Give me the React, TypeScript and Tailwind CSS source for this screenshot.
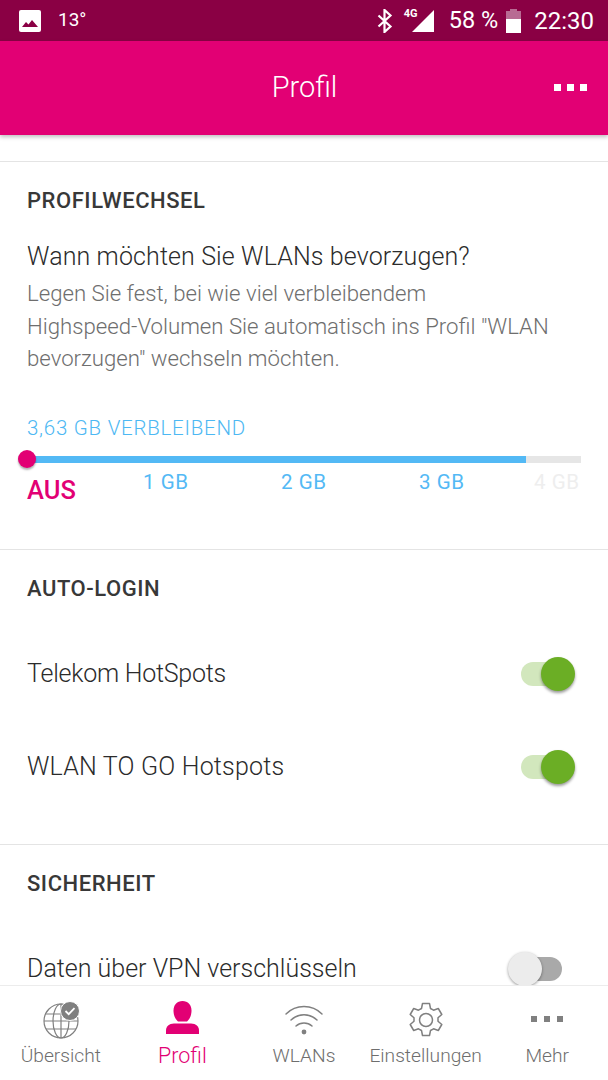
import React from 'react';

const Toggle = ({ on }: { on: boolean }) =>
  on ? (
    <div className="relative w-[54px] h-[24px] shrink-0">
      <div className="absolute left-0 top-0 w-[46px] h-[24px] rounded-full bg-[#d2e7bd]" />
      <div className="absolute left-[20px] top-[-5px] w-[34px] h-[34px] rounded-full bg-[#6bae25] shadow-[0_2px_3px_rgba(0,0,0,0.4)]" />
    </div>
  ) : (
    <div className="relative w-[54px] h-[24px] shrink-0">
      <div className="absolute left-[8px] top-0 w-[46px] h-[24px] rounded-full bg-[#a9a9a9]" />
      <div className="absolute left-0 top-[-5px] w-[34px] h-[34px] rounded-full bg-[#ececec] shadow-[0_1px_3px_rgba(0,0,0,0.4)]" />
    </div>
  );

const SettingRow = ({ label, on, className, labelClass }: { label: string; on: boolean; className: string; labelClass?: string }) => (
  <div className={`flex items-center justify-between pl-[27px] ${className}`}>
    <span className={`text-[25px] font-light leading-[32px] text-[#2b2b2b] ${labelClass ?? ''}`}>{label}</span>
    <Toggle on={on} />
  </div>
);

const SectionTitle = ({ children }: { children: React.ReactNode }) => (
  <h2 className="px-[27px] text-[22px] leading-[28px] font-medium tracking-[0.55px] text-[#383838]">{children}</h2>
);

const navItems = [
  {
    label: 'Übersicht',
    icon: (
      <svg width="40" height="38" viewBox="0 0 40 38" fill="none" stroke="#808080" strokeWidth="1.2">
        <circle cx="20" cy="20" r="17" />
        <ellipse cx="20" cy="20" rx="8" ry="17" />
        <path d="M20 3v34M4 13h32M3 20h34M5 28h30" />
        <circle cx="29" cy="10" r="9.5" fill="#808080" stroke="#fff" strokeWidth="1" />
        <path d="M24.5 10l3.2 3.2 5.8-6" stroke="#fff" strokeWidth="1.8" />
      </svg>
    ),
  },
  {
    label: 'Profil',
    active: true,
    icon: (
      <svg className="-mt-[5px]" width="33" height="33" viewBox="0 0 33 33" fill="#e20074">
        <path d="M16.500 0c5.500 0 9 4 9 9.500 0 4.500-1.500 8.500-4.500 11h-9c-3-2.500-4.500-6.500-4.500-11C7.500 4 11 0 16.500 0z" />
        <path d="M8 22.500h17c5 0 8 3 8 7V33H0v-3.500c0-4 3-7 8-7z" />
      </svg>
    ),
  },
  {
    label: 'WLANs',
    icon: (
      <svg width="40" height="34" viewBox="0 0 40 34" fill="none" stroke="#808080" strokeWidth="1.5" strokeLinecap="round">
        <path d="M2 11c10-10 26-10 36 0" />
        <path d="M7 17c7.500-7 18.500-7 26 0" />
        <path d="M12 23c4.500-4 11.500-4 16 0" />
        <circle cx="20" cy="29" r="2.400" fill="#808080" stroke="none" />
      </svg>
    ),
  },
  {
    label: 'Einstellungen',
    icon: (
      <svg width="36" height="36" viewBox="0 0 36 36" fill="none" stroke="#808080" strokeWidth="1.5" strokeLinejoin="round">
        <path d="M14.500 1.500h7l1 5 3 1.700 4.800-1.700 3.500 6-3.800 3.300v3.400l3.800 3.300-3.500 6-4.800-1.700-3 1.700-1 5h-7l-1-5-3-1.700-4.800 1.700-3.500-6 3.800-3.300v-3.400L2.200 12.500l3.500-6 4.800 1.700 3-1.700z" />
        <circle cx="18" cy="18" r="6.500" />
      </svg>
    ),
  },
  {
    label: 'Mehr',
    icon: (
      <div className="flex gap-[7px] h-[36px] items-center pb-[3px]">
        <span className="w-[6px] h-[6px] bg-[#808080]" />
        <span className="w-[6px] h-[6px] bg-[#808080]" />
        <span className="w-[6px] h-[6px] bg-[#808080]" />
      </div>
    ),
  },
];

export default function App() {
  return (
    <div className="w-[608px] h-[1080px] flex flex-col overflow-hidden bg-white font-['Roboto',sans-serif]">
      {/* Status bar */}
      <div className="h-[41px] shrink-0 bg-[#8a0044] flex items-center justify-between pl-[19px] pr-[14px] text-white">
        <div className="flex items-center gap-[17px]">
          <svg width="22" height="22" viewBox="0 0 22 22">
            <rect width="22" height="22" rx="2" fill="#fff" />
            <path d="M3 17l4-5 2.500 2.500L13 10l6 7z" fill="#8a0044" />
          </svg>
          <span className="text-[19px] font-normal">13°</span>
        </div>
        <div className="flex items-center">
          <svg width="16" height="24" viewBox="0 0 16 24" fill="none" stroke="#fff" strokeWidth="2.200">
            <path d="M1.500 6.500l12 11-6 5.500V1l6 5.500-12 11" />
          </svg>
          <div className="relative w-[31px] h-[24px] ml-[11px]">
            <svg className="absolute left-0 top-0" width="31" height="24" viewBox="0 0 31 24">
              <path d="M30 1v22H8z" fill="#fff" />
            </svg>
            <span className="absolute left-0 top-[-3px] text-[11px] font-bold leading-[16px] bg-[#8a0044]">4G</span>
          </div>
          <span className="ml-[14px] text-[23.5px] font-normal leading-none">58 %</span>
          <div className="ml-[8px] w-[15px] h-[24px] flex flex-col items-center">
            <div className="w-[7px] h-[2px] bg-[#b86b93]" />
            <div className="w-[15px] h-[8px] bg-[#b86b93]" />
            <div className="w-[15px] h-[14px] bg-white" />
          </div>
          <span className="ml-[13px] text-[24px] font-normal leading-none">22:30</span>
        </div>
      </div>

      {/* Header */}
      <div className="relative z-10 h-[94px] shrink-0 bg-[#e20074] flex items-center justify-center shadow-[0_2px_4px_rgba(0,0,0,0.25)]">
        <h1 className="text-[29px] font-light text-white pl-[1px]">Profil</h1>
        <div className="absolute right-[21px] top-[43px] flex gap-[6px]">
          <span className="w-[7px] h-[7px] bg-white" />
          <span className="w-[7px] h-[7px] bg-white" />
          <span className="w-[7px] h-[7px] bg-white" />
        </div>
      </div>

      {/* Scrolled content */}
      <div className="flex-1 min-h-0 pt-[26px]">
        <section className="border-t border-[#e4e4e4] pt-[25px] h-[388px]">
          <SectionTitle>PROFILWECHSEL</SectionTitle>
          <div className="px-[27px] mt-[26px]">
            <p className="text-[25px] leading-[32px] font-light tracking-[0.12px] text-[#2b2b2b]">Wann möchten Sie WLANs bevorzugen?</p>
            <p className="mt-[4px] text-[22.2px] leading-[32.500px] font-light text-[#6e6e6e]">
              Legen Sie fest, bei wie viel verbleibendem
              <br />
              Highspeed-Volumen Sie automatisch ins Profil "WLAN
              <br />
              bevorzugen" wechseln möchten.
            </p>
            <p className="mt-[39px] text-[20.5px] leading-[28px] font-light tracking-[0.75px] text-[#4db8f3]">3,63 GB VERBLEIBEND</p>
            <div className="relative mt-[14px] h-[7px] bg-[#e6e6e6]">
              <div className="h-full w-[499px] bg-[#53b9f5]" />
              <div className="absolute left-[-9px] top-[-6px] w-[18px] h-[18px] rounded-full bg-[#e20074] shadow-[0_2px_2px_rgba(0,0,0,0.3)]" />
            </div>
            <div className="grid grid-cols-[116px_138px_138px_115px_1fr] items-start text-[20.5px] font-normal tracking-[0.6px] text-[#53b9f5]">
              <span className="mt-[11px] text-[25.5px] leading-[32px] font-medium tracking-normal text-[#e20074]">AUS</span>
              <span className="mt-[5px] leading-[28px]">1 GB</span>
              <span className="mt-[5px] leading-[28px]">2 GB</span>
              <span className="mt-[5px] leading-[28px]">3 GB</span>
              <span className="mt-[5px] leading-[28px] text-[#eeeeee]">4 GB</span>
            </div>
          </div>
        </section>

        <section className="border-t border-[#e4e4e4] pt-[25px] h-[295px]">
          <SectionTitle>AUTO-LOGIN</SectionTitle>
          <SettingRow label="Telekom HotSpots" on className="mt-[55px] pr-[33px]" labelClass="tracking-[-0.25px]" />
          <SettingRow label="WLAN TO GO Hotspots" on className="mt-[61px] pr-[33px]" labelClass="tracking-[0.2px]" />
        </section>

        <section className="border-t border-[#e4e4e4] pt-[25px]">
          <SectionTitle>SICHERHEIT</SectionTitle>
          <SettingRow label="Daten über VPN verschlüsseln" on={false} className="mt-[55px] pr-[46px]" />
        </section>
      </div>

      {/* Bottom nav */}
      <nav className="relative h-[95px] shrink-0 bg-white border-t border-[#ececec] grid grid-cols-5">
        {navItems.map((item) => (
          <div key={item.label} className="flex flex-col items-center pt-[15px]">
            <div className="h-[38px] flex items-center justify-center">{item.icon}</div>
            <span className={`mt-[4px] whitespace-nowrap leading-[26px] font-light ${item.active ? 'text-[21.5px] text-[#e20074]' : 'text-[19.2px] text-[#6e6e6e]'}`}>
              {item.label}
            </span>
          </div>
        ))}
      </nav>
    </div>
  );
}
